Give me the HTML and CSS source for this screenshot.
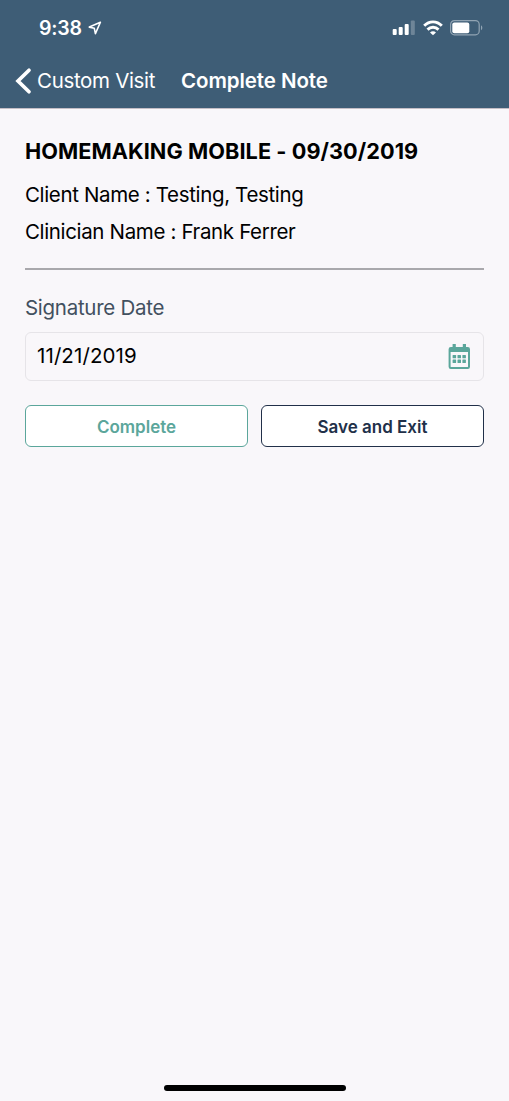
FILE: index.html
```html
<!DOCTYPE html>
<html lang="en">
<head>
<meta charset="utf-8">
<meta name="viewport" content="width=device-width">
<title>Complete Note</title>
<link rel="stylesheet" href="styles.css">
</head>
<body>
<div class="screen">
  <header class="header">
    <div class="status">
      <span class="time">9:38</span>
      <svg class="location" width="14" height="14" viewBox="0 0 14 14"><path d="M12.4 1.3 1.3 6.1 6.3 7.3 7.4 12.6Z" fill="none" stroke="#fff" stroke-width="1.6" stroke-linejoin="round"/></svg>
      <svg class="signal" width="23" height="15" viewBox="0 0 23 15"><g fill="#fff"><rect x=".7" y="9" width="4" height="6" rx="1"/><rect x="6.7" y="7" width="4" height="8" rx="1"/><rect x="12.7" y="4" width="4" height="11" rx="1"/><rect x="18.8" y="0.5" width="4" height="14.5" rx="1" opacity=".25"/></g></svg>
      <svg class="wifi" width="20" height="16" viewBox="0 0 20 16"><g fill="none" stroke="#fff" stroke-width="2.9"><path d="M1.2 5.8C6.2 .5 13.8 .5 18.8 5.8"/><path d="M4.5 9.6C7.7 6.5 12.3 6.5 15.5 9.6"/></g><path d="M7 12.4C8.8 10.8 11.2 10.8 13 12.4L10 15.2Z" fill="#fff"/></svg>
      <svg class="battery" width="33" height="16" viewBox="0 0 33 16"><rect x=".6" y=".6" width="28.6" height="14.2" rx="3.8" fill="none" stroke="#91a4b3" stroke-width="1.2"/><rect x="2.3" y="2.5" width="17" height="10.7" rx="2" fill="#fff"/><path d="M31 5.2C32.8 6.2 32.8 9.2 31 10.2Z" fill="#91a4b3"/></svg>
    </div>
    <nav class="nav">
      <svg class="chevron" width="17" height="28" viewBox="0 0 17 28"><path d="M14 3.2 3 14 14 24.8" fill="none" stroke="#fff" stroke-width="3.7" stroke-linecap="round" stroke-linejoin="miter"/></svg>
      <a class="back">Custom Visit</a>
      <h1 class="title">Complete Note</h1>
    </nav>
  </header>
  <main class="content">
    <h2 class="visit">HOMEMAKING MOBILE - 09/30/2019</h2>
    <p class="detail client">Client Name : Testing, Testing</p>
    <p class="detail">Clinician Name : Frank Ferrer</p>
    <hr class="rule">
    <div class="label">Signature Date</div>
    <div class="field">
      <span class="date">11/21/2019</span>
      <svg class="calendar" width="22" height="26" viewBox="0 0 22 26"><g fill="#5ba69b" transform="translate(.6 0)"><path fill-rule="evenodd" d="M4 0h3.2v3h7V0h3.2v3h1.8A2.2 2.2 0 0 1 21.4 5.2v17.6a2.2 2.2 0 0 1-2.2 2.2H2.2A2.2 2.2 0 0 1 0 22.8V5.2A2.2 2.2 0 0 1 2.2 3H4ZM2 8v14.4q0 .6.6.6h16.2q.6 0 .6-.6V8Z"/><rect x="4" y="11" width="3.5" height="3.3" rx=".5"/><rect x="8.9" y="11" width="3.5" height="3.3" rx=".5"/><rect x="13.8" y="11" width="3.5" height="3.3" rx=".5"/><rect x="4" y="15.6" width="3.5" height="3.3" rx=".5"/><rect x="8.9" y="15.6" width="3.5" height="3.3" rx=".5"/><rect x="13.8" y="15.6" width="3.5" height="3.3" rx=".5"/></g></svg>
    </div>
    <div class="actions">
      <button class="button complete">Complete</button>
      <button class="button save">Save and Exit</button>
    </div>
  </main>
  <div class="home"></div>
</div>
</body>
</html>
```
FILE: styles.css
```css
* { box-sizing: border-box; margin: 0; }
body { background: #f9f7fa; font-family: Inter, "Liberation Sans", sans-serif; color: #000; }
.screen { height: 1101px; display: flex; flex-direction: column; }
.header { height: 109px; background: #3e5d76; color: #fff; border-bottom: 1px solid #c4bec6; }
.status { height: 55px; display: flex; align-items: center; padding-left: 39px; }
.time { width: 49px; font-size: 19.5px; font-weight: 600; letter-spacing: -.2px; }
.signal { margin-left: 290px; }
.wifi { margin-left: 7.5px; }
.battery { margin-left: 7.5px; }
.nav { height: 52px; display: flex; align-items: center; padding-left: 15px; }
.chevron { margin-right: 5px; }
.back { width: 144px; padding-bottom: 1px; font-size: 20.5px; letter-spacing: -.33px; white-space: nowrap; }
.title { padding-bottom: 1px; font-size: 20.5px; font-weight: 600; letter-spacing: -.08px; white-space: nowrap; }
.content { padding: 22px 25px 0; flex: 1; }
.visit { height: 40px; line-height: 40px; font-size: 21.7px; font-weight: 700; letter-spacing: .06px; white-space: nowrap; }
.detail { height: 37px; line-height: 37px; font-size: 20.5px; letter-spacing: -.35px; white-space: nowrap; }
.client { margin-top: 5px; }
.rule { height: 2px; border: 0; background: #a9a8ac; margin-top: 18px; }
.label { height: 37px; line-height: 37px; margin-top: 19px; font-size: 20.5px; letter-spacing: -.28px; color: #42505f; }
.field { height: 49px; margin-top: 6px; padding: 0 13px 0 11px; display: flex; align-items: center; justify-content: space-between; border: 1px solid #e6e4e8; border-radius: 6px; }
.date { padding-bottom: 2px; font-size: 20.5px; letter-spacing: .1px; }
.actions { display: grid; grid-template-columns: 1fr 1fr; gap: 13px; margin-top: 24px; }
.button { height: 42px; padding: 1px 0 0; background: #fff; border: 1.5px solid currentColor; border-radius: 6px; font: 600 17px Inter, "Liberation Sans", sans-serif; }
.complete { color: #5ba69b; }
.save { color: #213049; }
.home { width: 182px; height: 6px; border-radius: 3px; background: #000; margin: 0 auto 10px; }
```
